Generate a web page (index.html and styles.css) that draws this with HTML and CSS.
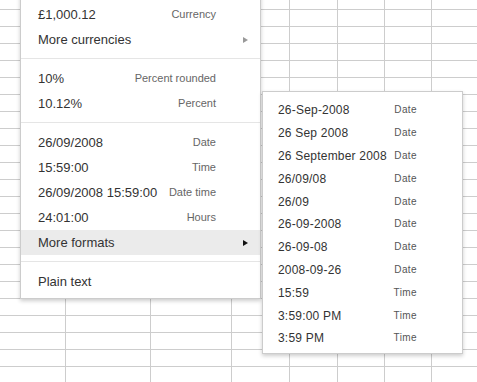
FILE: index.html
```html
<!DOCTYPE html>
<html lang="en">
<head>
  <meta charset="UTF-8" />
  <title>Number formats</title>
  <link rel="stylesheet" href="styles.css">
</head>
<body>
  <div class="sheet">
    <div class="columns">
      <div class="col" style="width: 66px"></div>
      <div class="col" style="width: 85px"></div>
      <div class="col" style="width: 81px"></div>
      <div class="col" style="width: 58px"></div>
      <div class="col" style="width: 48px"></div>
      <div class="col" style="width: 47px"></div>
      <div class="col" style="width: 47px"></div>
      <div class="col last"></div>
    </div>

    <div class="menu main-menu">
      <div class="item"><span class="name">£1,000.12</span><span class="hint">Currency</span><span class="slot"></span></div>
      <div class="item"><span class="name">More currencies</span><span class="slot"><i class="arrow dim"></i></span></div>
      <div class="sep"></div>
      <div class="item"><span class="name">10%</span><span class="hint">Percent rounded</span><span class="slot"></span></div>
      <div class="item"><span class="name">10.12%</span><span class="hint">Percent</span><span class="slot"></span></div>
      <div class="sep"></div>
      <div class="item"><span class="name">26/09/2008</span><span class="hint">Date</span><span class="slot"></span></div>
      <div class="item"><span class="name">15:59:00</span><span class="hint">Time</span><span class="slot"></span></div>
      <div class="item"><span class="name">26/09/2008 15:59:00</span><span class="hint">Date time</span><span class="slot"></span></div>
      <div class="item"><span class="name">24:01:00</span><span class="hint">Hours</span><span class="slot"></span></div>
      <div class="item active"><span class="name">More formats</span><span class="slot"><i class="arrow"></i></span></div>
      <div class="sep"></div>
      <div class="item"><span class="name">Plain text</span><span class="slot"></span></div>
    </div>

    <div class="menu sub-menu">
      <div class="item"><span class="name">26-Sep-2008</span><span class="hint">Date</span></div>
      <div class="item"><span class="name">26 Sep 2008</span><span class="hint">Date</span></div>
      <div class="item"><span class="name">26 September 2008</span><span class="hint">Date</span></div>
      <div class="item"><span class="name">26/09/08</span><span class="hint">Date</span></div>
      <div class="item"><span class="name">26/09</span><span class="hint">Date</span></div>
      <div class="item"><span class="name">26-09-2008</span><span class="hint">Date</span></div>
      <div class="item"><span class="name">26-09-08</span><span class="hint">Date</span></div>
      <div class="item"><span class="name">2008-09-26</span><span class="hint">Date</span></div>
      <div class="item"><span class="name">15:59</span><span class="hint">Time</span></div>
      <div class="item"><span class="name">3:59:00 PM</span><span class="hint">Time</span></div>
      <div class="item"><span class="name">3:59 PM</span><span class="hint">Time</span></div>
    </div>
  </div>
</body>
</html>
```

FILE: styles.css
```css
* {
  box-sizing: border-box;
}

body {
  margin: 0;
  background: #fff;
  font-family: "Liberation Sans", Arial, sans-serif;
}

.sheet {
  position: relative;
  width: 477px;
  height: 382px;
  overflow: hidden;
  background-image: linear-gradient(to bottom, transparent 16px, #cdcdcd 16px);
  background-size: 100% 17px;
  background-position: 0 -7px;
}

.columns {
  display: flex;
  height: 100%;
}

.col {
  flex: none;
  height: 100%;
  border-right: 1px solid #cdcdcd;
}

.col.last {
  flex: 1;
  border-right: none;
}

.menu {
  position: absolute;
  background: #fff;
  border: 1px solid rgba(0, 0, 0, 0.2);
  box-shadow: 0 2px 4px rgba(0, 0, 0, 0.2);
}

.main-menu {
  left: 20px;
  top: -8px;
  width: 241px;
  padding: 9px 0 4px;
}

.sub-menu {
  left: 262px;
  top: 91px;
  width: 201px;
  padding: 7px 0 3px;
}

.item {
  display: flex;
  align-items: center;
  color: #333;
  white-space: nowrap;
}

.main-menu .item {
  height: 25px;
  padding: 0 12px 0 17px;
  font-size: 13px;
}

.main-menu .item.active {
  background: #ebebeb;
}

.item .name {
  flex: 1;
}

.main-menu .hint {
  font-size: 11px;
  color: #666;
  margin-top: -2px;
}

.slot {
  width: 32px;
  display: flex;
  justify-content: flex-end;
}

.arrow {
  width: 0;
  height: 0;
  border-left: 5px solid #111;
  border-top: 3px solid transparent;
  border-bottom: 3px solid transparent;
}

.arrow.dim {
  border-left-color: #999;
}

.sep {
  height: 1px;
  margin: 6px 0 7px;
  background: #e5e5e5;
}

.sub-menu .item {
  height: 22.8px;
  padding: 0 45px 0 15px;
  font-size: 12px;
  letter-spacing: 0.2px;
}

.sub-menu .hint {
  font-size: 10px;
  letter-spacing: 0.4px;
  color: #555;
  margin-top: -1px;
}
```
